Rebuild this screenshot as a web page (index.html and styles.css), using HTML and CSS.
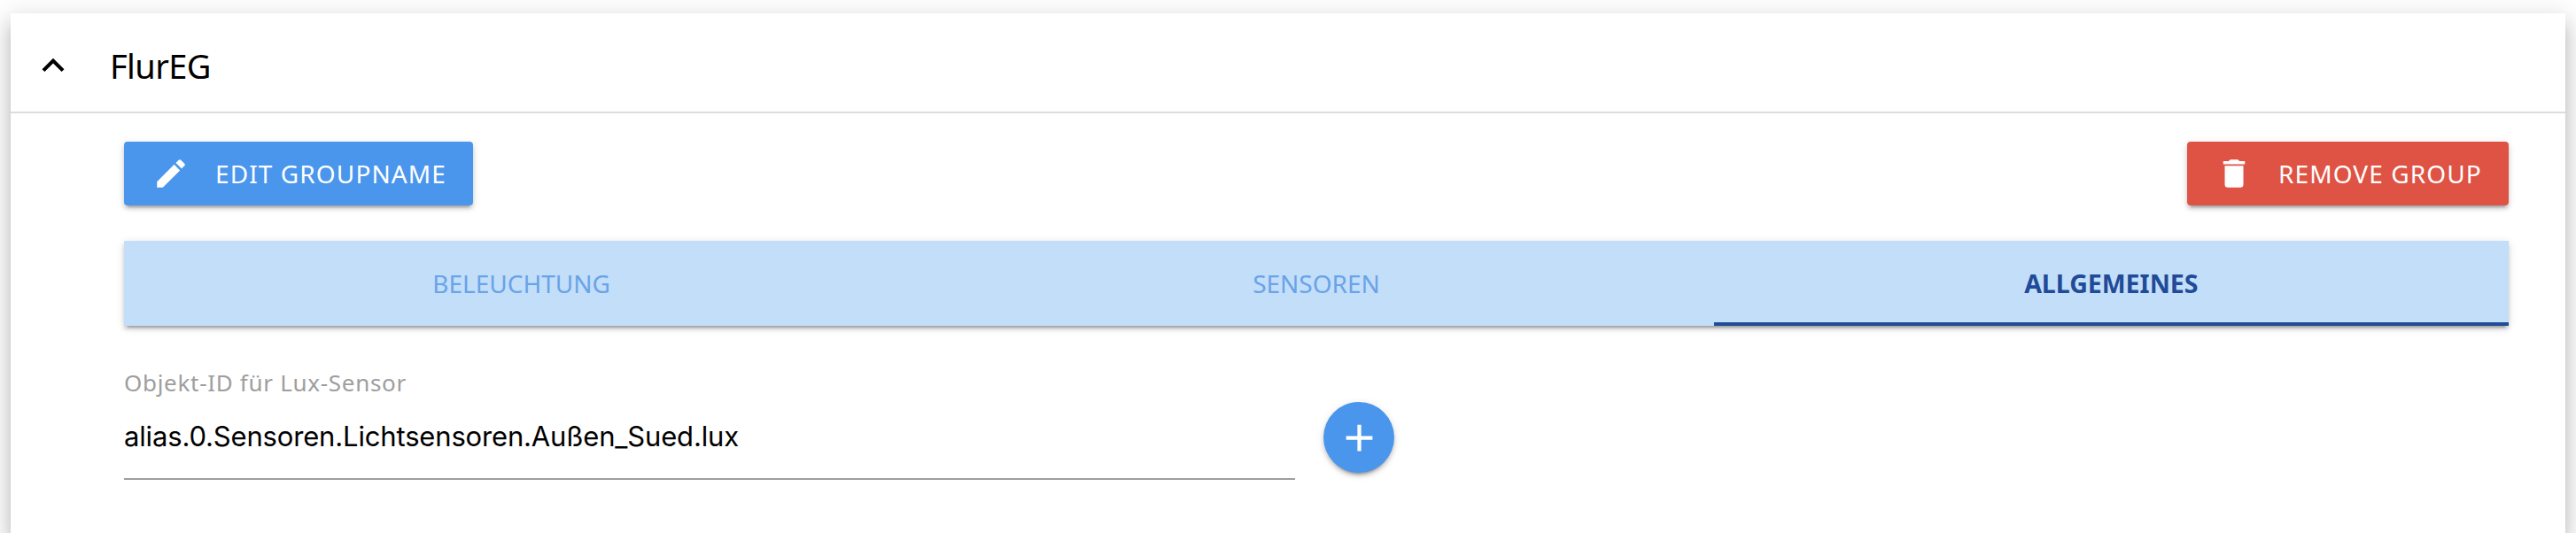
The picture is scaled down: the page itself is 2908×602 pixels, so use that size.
FILE: index.html
```html
<!DOCTYPE html>
<html lang="de">
<head>
<meta charset="utf-8">
<title>FlurEG</title>
<link rel="stylesheet" href="styles.css">
</head>
<body>
<section class="card">
  <header class="card-header">
    <svg class="chevron" viewBox="0 0 24 24"><path d="M7.41,15.41L12,10.83L16.59,15.41L18,14L12,8L6,14L7.41,15.41Z"/></svg>
    <h1 class="title">FlurEG</h1>
  </header>
  <div class="content">
    <div class="actions">
      <button class="btn btn-edit"><svg class="icon" viewBox="0 0 24 24"><path d="M20.71,7.04C21.1,6.65 21.1,6 20.71,5.63L18.37,3.29C18,2.9 17.35,2.9 16.96,3.29L15.12,5.12L18.87,8.87M3,17.25V21H6.75L17.81,9.93L14.06,6.18L3,17.25Z"/></svg><span>EDIT GROUPNAME</span></button>
      <button class="btn btn-remove"><svg class="icon" viewBox="0 0 24 24"><path d="M19,4H15.5L14.5,3H9.5L8.5,4H5V6H19M6,19A2,2 0 0,0 8,21H16A2,2 0 0,0 18,19V7H6V19Z"/></svg><span>REMOVE GROUP</span></button>
    </div>
    <nav class="tabs">
      <a class="tab">BELEUCHTUNG</a>
      <a class="tab">SENSOREN</a>
      <a class="tab active">ALLGEMEINES</a>
    </nav>
    <div class="row">
      <div class="field">
        <label class="label">Objekt-ID für Lux-Sensor</label>
        <div class="value">alias.0.Sensoren.Lichtsensoren.Außen_Sued.lux</div>
      </div>
      <button class="fab"><svg class="plus" viewBox="0 0 24 24"><path d="M19,13H13V19H11V13H5V11H11V5H13V11H19V13Z"/></svg></button>
    </div>
  </div>
</section>
</body>
</html>
```
FILE: styles.css
```css
* { box-sizing: border-box; }
html, body { margin: 0; height: 602px; overflow: hidden; background: #fff; }
body { padding: 15px 12px 0; font-family: "Noto Sans", "Open Sans", sans-serif; color: #000; }
button { border: 0; font: inherit; padding: 0; }
svg { display: block; flex: none; }
.card { height: 587px; background: #fff; box-shadow: 0 10px 10px -6px rgba(0,0,0,.2), 0 16px 20px 2px rgba(0,0,0,.14), 0 6px 28px 4px rgba(0,0,0,.12); }
.card-header { display: flex; align-items: center; height: 113px; padding-left: 23px; border-bottom: 2px solid #ddd; }
.chevron { width: 50px; height: 50px; margin-top: 6px; }
.title { margin: 7px 0 0 39px; font-size: 38px; font-weight: 430; line-height: 50px; letter-spacing: -0.6px; }
.content { padding: 32px 64px 0 128px; }
.actions { display: flex; justify-content: space-between; }
.btn { display: flex; align-items: center; height: 72px; border-radius: 4px; color: #fff; font-size: 28px; line-height: 40px; font-weight: 450; letter-spacing: 1.1px; white-space: nowrap; box-shadow: 0 6px 2px -4px rgba(0,0,0,.2), 0 4px 4px rgba(0,0,0,.14), 0 2px 10px rgba(0,0,0,.12); }
.btn-edit { width: 394px; padding-left: 32px; background: #4a96ec; }
.btn-remove { width: 363px; padding-left: 32px; background: #df5344; }
.icon { width: 42px; height: 42px; margin-right: 29px; fill: currentColor; }
.tabs { display: grid; grid-template-columns: repeat(3, 1fr); height: 96px; margin-top: 40px; background: #c3def9; box-shadow: 0 6px 2px -4px rgba(0,0,0,.2), 0 4px 4px rgba(0,0,0,.14), 0 2px 10px rgba(0,0,0,.12); }
.tab { display: flex; align-items: center; justify-content: center; color: #69a3e8; font-size: 28px; font-weight: 430; }
.active { color: #214b98; font-size: 28.5px; font-weight: 700; box-shadow: inset 0 -4px #214b98; }
.row { display: flex; margin-top: 40px; }
.field { width: 1322px; height: 134px; border-bottom: 2px solid #9e9e9e; }
.label { display: block; color: #9e9e9e; font-size: 26px; font-weight: 430; line-height: 48px; letter-spacing: 0.7px; }
.value { margin-top: 12px; font: 31px/50px Inter, sans-serif; letter-spacing: -0.16px; }
.fab { display: flex; align-items: center; justify-content: center; width: 80px; height: 80px; margin: 46px 0 0 32px; border-radius: 50%; color: #fff; background: #4a96ec; box-shadow: 0 6px 2px -4px rgba(0,0,0,.2), 0 4px 4px rgba(0,0,0,.14), 0 2px 10px rgba(0,0,0,.12); }
.plus { width: 51px; height: 51px; fill: currentColor; }
```
